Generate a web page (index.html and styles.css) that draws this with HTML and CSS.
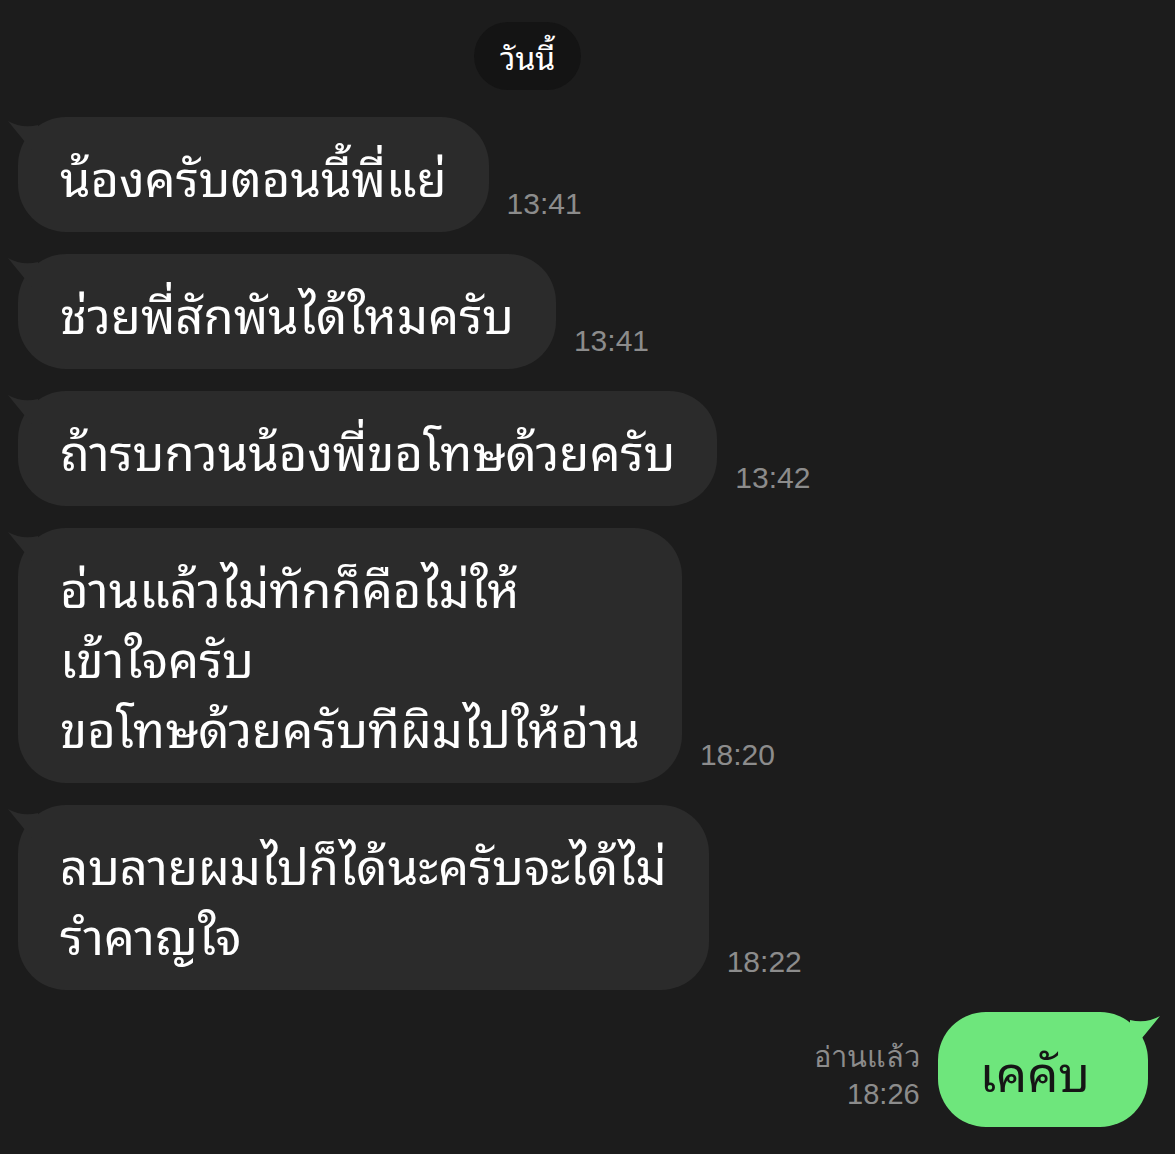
FILE: index.html
```html
<!DOCTYPE html>
<html lang="th">
<head>
  <meta charset="UTF-8" />
  <title>แชท</title>
  <meta name="viewport" content="width=device-width, initial-scale=1" />
  <link rel="stylesheet" href="styles.css">
</head>
<body>

  <div class="date-row">
    <span class="date-pill">วันนี้</span>
  </div>

  <div class="msg in">
    <div class="bubble">
      <svg class="tail" width="30" height="44" viewBox="0 0 30 44"><path d="M0 4 Q14 12 30 8 L30 40 Q16 24 0 4 Z"/></svg>
      น้องครับตอนนี้พี่แย่
    </div>
    <span class="time">13:41</span>
  </div>

  <div class="msg in">
    <div class="bubble">
      <svg class="tail" width="30" height="44" viewBox="0 0 30 44"><path d="M0 4 Q14 12 30 8 L30 40 Q16 24 0 4 Z"/></svg>
      ช่วยพี่สักพันได้ใหมครับ
    </div>
    <span class="time">13:41</span>
  </div>

  <div class="msg in">
    <div class="bubble">
      <svg class="tail" width="30" height="44" viewBox="0 0 30 44"><path d="M0 4 Q14 12 30 8 L30 40 Q16 24 0 4 Z"/></svg>
      ถ้ารบกวนน้องพี่ขอโทษด้วยครับ
    </div>
    <span class="time">13:42</span>
  </div>

  <div class="msg in">
    <div class="bubble">
      <svg class="tail" width="30" height="44" viewBox="0 0 30 44"><path d="M0 4 Q14 12 30 8 L30 40 Q16 24 0 4 Z"/></svg>
      <span class="line">อ่านแล้วไม่ทักก็คือไม่ให้</span>
      <span class="line">เข้าใจครับ</span>
      <span class="line">ขอโทษด้วยครับทีผิมไปให้อ่าน</span>
    </div>
    <span class="time">18:20</span>
  </div>

  <div class="msg in">
    <div class="bubble">
      <svg class="tail" width="30" height="44" viewBox="0 0 30 44"><path d="M0 4 Q14 12 30 8 L30 40 Q16 24 0 4 Z"/></svg>
      <span class="line">ลบลายผมไปก็ได้นะครับจะได้ไม่</span>
      <span class="line">รำคาญใจ</span>
    </div>
    <span class="time">18:22</span>
  </div>

  <div class="msg out">
    <div class="meta">
      <span>อ่านแล้ว</span>
      <span>18:26</span>
    </div>
    <div class="bubble">
      <svg class="tail" width="30" height="44" viewBox="0 0 30 44"><path d="M30 4 Q16 12 0 8 L0 40 Q14 24 30 4 Z"/></svg>
      เคคับ
    </div>
  </div>

</body>
</html>
```

FILE: styles.css
```css
body {
  margin: 0;
  padding: 22px 0 28px 18px;
  background-color: #1c1c1c;
  font-family: "Noto Sans Thai Looped", "Loma", "Garuda", "Waree", "Noto Sans Thai", "Noto Sans", sans-serif;
  color: #fff;
}

.date-row {
  display: flex;
  padding-left: 456px;
  margin-bottom: 27px;
}
.date-pill {
  background-color: #141414;
  color: #fff;
  font-size: 32px;
  line-height: 68px;
  padding: 0 26px;
  border-radius: 34px;
}

.msg {
  display: flex;
  align-items: flex-end;
  margin-bottom: 22px;
}
.msg.out {
  justify-content: flex-end;
  padding-right: 27px;
  margin-bottom: 0;
}

.bubble {
  position: relative;
  background-color: #2b2b2b;
  font-size: 49px;
  line-height: 70px;
  padding: 23px 42px 22px;
  border-radius: 48px;
}
.bubble .line {
  display: block;
}
.tail {
  position: absolute;
  left: -10px;
  top: 0;
  fill: #2b2b2b;
}

.time {
  font-family: "Liberation Sans", Arial, sans-serif;
  font-size: 30px;
  color: #8c8c8c;
  margin: 0 0 11px 18px;
}

.out .bubble {
  background-color: #6ee67c;
  color: #151515;
  padding: 23px 58px 22px 42px;
}
.out .tail {
  left: auto;
  right: -12px;
  fill: #6ee67c;
}
.meta {
  display: flex;
  flex-direction: column;
  align-items: flex-end;
  font-family: "Liberation Sans", Arial, sans-serif;
  font-size: 29px;
  line-height: 37px;
  color: #8c8c8c;
  margin: 0 18px 14px 0;
}
```
